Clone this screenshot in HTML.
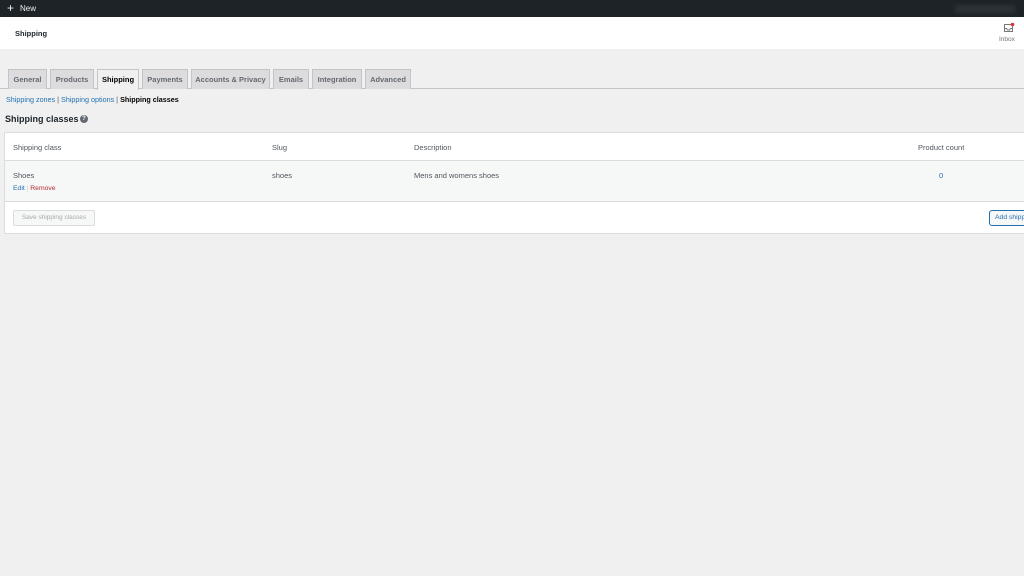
<!DOCTYPE html>
<html><head><style>
*{margin:0;padding:0;box-sizing:border-box}
body{width:1024px;height:576px;background:#f0f0f1;font-family:"Liberation Sans",sans-serif;position:relative;overflow:hidden;color:#1d2327}
.abs{position:absolute;white-space:nowrap}
.top{left:0;top:0;width:1024px;height:17px;background:#1d2327;color:#f0f0f1;font-size:8px}
.hdr{left:0;top:17px;width:1024px;height:32px;background:#fff}
.tab{position:absolute;top:69px;height:20px;background:#dcdcde;border:1px solid #c3c4c7;border-bottom:none;font-size:7.5px;font-weight:bold;color:#646970;text-align:center;line-height:19px;white-space:nowrap}
.tab.a{background:#f0f0f1;color:#000;height:21px}
.t{font-size:7.5px;color:#50575e}
a{color:#2271b1;text-decoration:none}
</style></head><body>
<div class="abs top"><span class="abs" style="left:7px;top:2px;font-size:12px;line-height:12px">+</span><span class="abs" style="left:20px;top:4px">New</span>
<div class="abs" style="left:955px;top:5px;width:60px;height:8px;background:#2c3338;filter:blur(2px)"></div></div>
<div class="abs hdr"><span class="abs" style="left:15px;top:12px;font-size:7.5px;font-weight:bold">Shipping</span>
<svg class="abs" style="left:1003px;top:5px" width="12" height="12" viewBox="0 0 12 12"><rect x="1.5" y="2.5" width="8" height="7" fill="none" stroke="#777" stroke-width="1"/><path d="M1.5 6.5h2l1 1.5h2l1-1.5h2" fill="none" stroke="#777" stroke-width="1"/><circle cx="9.5" cy="2.5" r="1.8" fill="#d63638"/></svg>
<span class="abs" style="left:999px;top:19px;font-size:6.5px;color:#757575">Inbox</span></div>
<div class="abs" style="left:0;top:88px;width:1024px;height:1px;background:#c3c4c7"></div>
<div class="tab" style="left:8px;width:39px">General</div>
<div class="tab" style="left:50px;width:44px">Products</div>
<div class="tab a" style="left:97px;width:42px">Shipping</div>
<div class="tab" style="left:142px;width:46px">Payments</div>
<div class="tab" style="left:191px;width:79px">Accounts &amp; Privacy</div>
<div class="tab" style="left:273px;width:36px">Emails</div>
<div class="tab" style="left:312px;width:50px">Integration</div>
<div class="tab" style="left:365px;width:46px">Advanced</div>
<div class="abs" style="left:6px;top:95px;font-size:7.2px;color:#50575e"><a>Shipping zones</a> | <a>Shipping options</a> | <b style="color:#000">Shipping classes</b></div>
<div class="abs" style="left:5px;top:114px;font-size:9px;font-weight:bold">Shipping classes</div>
<div class="abs" style="left:80px;top:115px;width:8px;height:8px;border-radius:50%;background:#646970;color:#fff;font-size:6px;text-align:center;line-height:8px;font-weight:bold">?</div>
<div class="abs" style="left:4px;top:132px;width:1030px;height:102px;background:#fff;border:1px solid #dcdcde">
<div class="abs" style="left:0;top:27px;width:100%;height:42px;background:#f6f7f7;border-top:1px solid #dcdcde;border-bottom:1px solid #dcdcde"></div>
<span class="abs t" style="left:8px;top:10px">Shipping class</span>
<span class="abs t" style="left:267px;top:10px">Slug</span>
<span class="abs t" style="left:409px;top:10px">Description</span>
<span class="abs t" style="left:913px;top:10px">Product count</span>
<span class="abs t" style="left:8px;top:38px">Shoes</span>
<span class="abs t" style="left:8px;top:52px;font-size:6.8px"><a>Edit</a> <span style="color:#ccc">|</span> <span style="color:#b32d2e">Remove</span></span>
<span class="abs t" style="left:267px;top:38px">shoes</span>
<span class="abs t" style="left:409px;top:38px">Mens and womens shoes</span>
<span class="abs t" style="left:934px;top:38px;color:#2271b1">0</span>
<div class="abs" style="left:8px;top:77px;width:82px;height:16px;border:1px solid #dcdcde;background:#f6f7f7;border-radius:2px;font-size:6.5px;color:#a7aaad;text-align:center;line-height:14px">Save shipping classes</div>
<div class="abs" style="left:984px;top:77px;width:80px;height:16px;border:1px solid #2271b1;background:#f6f7f7;border-radius:3px;font-size:6.8px;color:#2271b1;line-height:14px;padding-left:5px">Add shipping class</div>
</div>
</body></html>
